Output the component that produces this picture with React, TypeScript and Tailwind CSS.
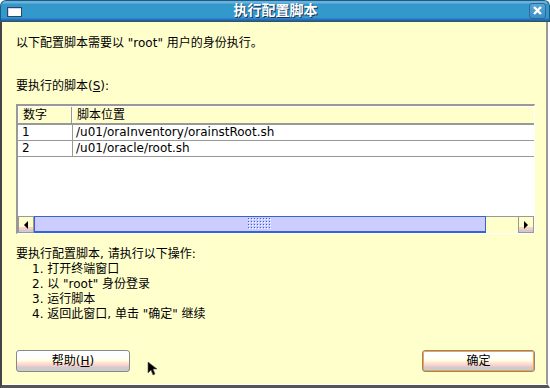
const font = "font-['DejaVu_Sans','Noto_Sans_CJK_SC',sans-serif]";

const ArrowBtn = ({ dir }: { dir: "left" | "right" }) => (
  <div className="w-[16px] h-full border border-[#999] bg-[linear-gradient(to_bottom,#ffffcc_0%,#ffffcc_65%,#ffcccc_70%,#ffcccc_82%,#cccccc_85%)] flex items-center justify-center">
    <svg width="6" height="8" viewBox="0 0 6 8">
      {dir === "left" ? <polygon points="5,0 5,8 1,4" fill="#000" /> : <polygon points="1,0 1,8 5,4" fill="#000" />}
    </svg>
  </div>
);

const Grip = () => (
  <svg width="24" height="12" viewBox="0 0 24 12">
    <defs>
      <pattern id="bumps" width="3" height="3" patternUnits="userSpaceOnUse">
        <rect x="0" y="0" width="1" height="1" fill="#3366cc" />
        <rect x="1" y="1" width="1" height="1" fill="#ffffff" />
      </pattern>
    </defs>
    <rect width="24" height="12" fill="url(#bumps)" />
  </svg>
);

const Button = ({ children, def }: { children: React.ReactNode; def?: boolean }) => (
  <button
    className={
      "h-[22px] rounded-[3px] border text-[12px] text-black bg-[linear-gradient(to_bottom,#ffffff_0%,#ffffff_38%,#ffffcc_50%,#ffdcdc_62%,#ffcccc_72%,#cccccc_82%,#cccccc_100%)] " +
      (def ? "w-[113px] border-[#888] shadow-[inset_0_0_0_1px_#ffa030]" : "w-[114px] border-[#888]")
    }
  >
    {children}
  </button>
);

export default function App() {
  return (
    <div className={`w-[550px] h-[388px] flex flex-col overflow-hidden bg-white ${font} text-[12px] text-black relative`}>
      {/* title bar */}
      <div className="h-[22px] shrink-0 rounded-t-[6px] border border-b-0 border-[#1d5b80] bg-[linear-gradient(to_bottom,#6ab2dd_0px,#6ab2dd_2px,#3399cc_3px,#3399cc_17px,#2a6bc8_18px,#2a6bc8_19px,#275a66_20px)] flex items-center relative">
        <div className="ml-[6px] w-[15px] h-[10px] border border-[#2a4a5a] bg-white shadow-[inset_1px_1px_0_#e6c8f0]" />
        <div className="flex-1 text-center text-[14px] font-bold text-white [text-shadow:1px_1px_0_#1a3550] -mt-[2px]">
          执行配置脚本
        </div>
        <div className="mr-[3px] -mt-[2px] w-[17px] h-[16px] rounded-[3px] border border-[#2a6a98] bg-[linear-gradient(to_bottom,#5aa4d6,#3a8fc6)] flex items-center justify-center">
          <svg width="9" height="9" viewBox="0 0 9 9">
            <path d="M1 1 L8 8 M8 1 L1 8" stroke="#fff" strokeWidth="2.4" />
          </svg>
        </div>
      </div>

      {/* body */}
      <div className="flex-1 flex border-l-2 border-l-[#444] border-r-2 border-r-white border-b-[3px] border-b-[#555]">
        <div className="flex-1 flex flex-col bg-[#ffffcc] border-r-2 border-r-[#9a9a9a] border-b border-b-white pl-[14px] pr-[11px]">
          <p className="mt-[13px] h-[16px] leading-[16px]">以下配置脚本需要以 "root" 用户的身份执行。</p>
          <p className="mt-[27px] h-[16px] leading-[16px]">
            要执行的脚本(<span className="underline">S</span>):
          </p>

          {/* table */}
          <div className="mt-[10px] w-[519px] h-[130px] flex flex-col border-l-2 border-t-2 border-l-[#999] border-t-[#999] border-r border-b border-r-white border-b-white">
            <div className="flex h-[19px] shrink-0 bg-[#ffffcc] border-t border-t-white border-b-2 border-b-[#999]">
              <div className="w-[54px] pl-[4px] border-l border-l-white border-r border-r-[#999] leading-[16px]">数字</div>
              <div className="flex-1 pl-[4px] border-l border-l-white leading-[16px]">脚本位置</div>
            </div>
            <div className="flex-1 bg-white flex flex-col">
              {[
                ["1", "/u01/oraInventory/orainstRoot.sh"],
                ["2", "/u01/oracle/root.sh"],
              ].map(([n, p]) => (
                <div key={n} className="flex h-[16px] border-b border-b-[#999]">
                  <div className="w-[55px] pl-[4px] border-r border-r-[#999] leading-[15px]">{n}</div>
                  <div className="flex-1 pl-[3px] leading-[15px]">{p}</div>
                </div>
              ))}
            </div>
            {/* horizontal scrollbar */}
            <div className="h-[17px] shrink-0 flex">
              <ArrowBtn dir="left" />
              <div className="w-[452px] h-full bg-[#ccccff] border border-b-2 border-[#3366cc] flex items-center justify-center">
                <Grip />
              </div>
              <div className="flex-1 h-full bg-[#ffffcc] border-t border-[#999]" />
              <ArrowBtn dir="right" />
            </div>
          </div>

          <div className="mt-[13px] leading-[15px]">
            <p>要执行配置脚本, 请执行以下操作:</p>
            <ol className="pl-[16px]">
              <li>1. 打开终端窗口</li>
              <li>2. 以 "root" 身份登录</li>
              <li>3. 运行脚本</li>
              <li>4. 返回此窗口, 单击 "确定" 继续</li>
            </ol>
          </div>

          <div className="mt-[28px] flex justify-between">
            <Button>
              帮助(<span className="underline">H</span>)
            </Button>
            <Button def>确定</Button>
          </div>
        </div>
      </div>

      {/* mouse pointer */}
      <svg className="absolute left-[147px] top-[361px]" width="11" height="15" viewBox="0 0 11 15">
        <polygon points="1,1 1,12 4,9 6,14 8,13 6,8 10,8" fill="#000" stroke="#555" strokeWidth="0.6" />
      </svg>
    </div>
  );
}
